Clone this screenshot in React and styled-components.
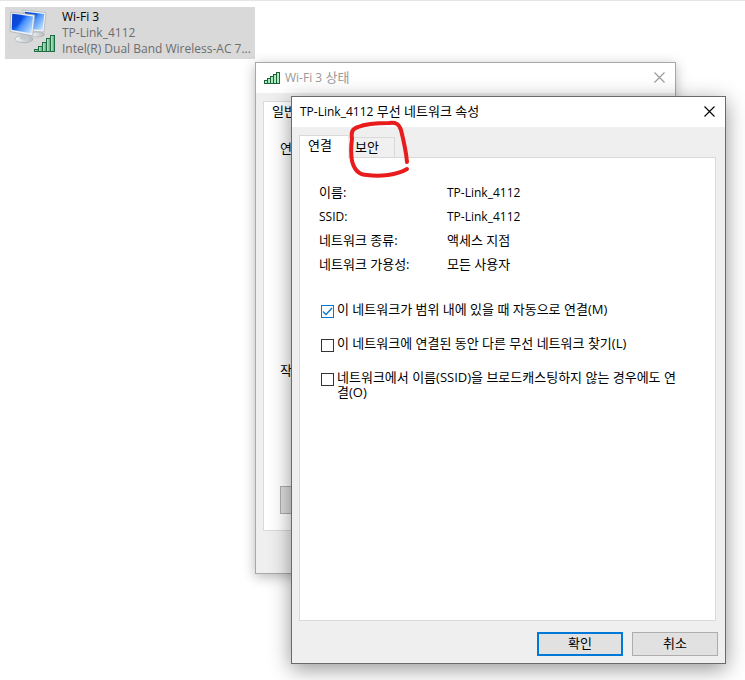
import React, { useState } from 'react';
import styled, { createGlobalStyle, css } from 'styled-components';

const GlobalStyle = createGlobalStyle`
  *, *::before, *::after {
    box-sizing: border-box;
  }

  body {
    margin: 0;
    background: #fff;
    color: #000;
    font-family: 'Open Sans', 'Noto Sans CJK KR', sans-serif;
    font-size: 13px;
    line-height: 16px;
  }

  button, input {
    font: inherit;
    color: inherit;
  }
`;

const Desktop = styled.main`
  position: relative;
  min-height: 100vh;
  padding: 6px 5px;
  border-top: 1px solid #e5e5e5;
  overflow: hidden;
`;

const Latin = styled.span`
  font-size: 12px;
`;

const Connection = styled.article`
  display: flex;
  gap: 6px;
  width: 250px;
  height: 52px;
  padding: 2px 0 2px 3px;
  background: #d9d9d9;
`;

const ConnectionText = styled.div`
  flex: 1;
  min-width: 0;
`;

const ConnectionLine = styled.div`
  overflow: hidden;
  white-space: nowrap;
  font-size: 12px;
  color: ${({ strong }) => (strong ? '#000' : '#6d6d6d')};
`;

const Window = styled.section`
  position: absolute;
  isolation: isolate;
  display: flex;
  flex-direction: column;
  background: #efefef;
  border: 1px solid #a8a8a8;
  box-shadow: 0 3px 12px rgba(0, 0, 0, 0.28);

  ${({ active }) =>
    active &&
    css`
      border-color: #6a6a6a;
      box-shadow: 0 5px 20px rgba(0, 0, 0, 0.42);
    `}
`;

const StatusWindow = styled(Window)`
  left: 255px;
  top: 61px;
  width: 421px;
  min-height: 512px;
`;

const PropertiesWindow = styled(Window)`
  left: 291px;
  top: 95px;
  width: 435px;
  min-height: 568px;
`;

const TitleBar = styled.header`
  display: flex;
  align-items: center;
  gap: 4px;
  height: 30px;
  padding: 0 8px 1px;
  background: #fff;
  color: ${({ inactive }) => (inactive ? '#999' : '#000')};
`;

const Title = styled.h1`
  flex: 1;
  margin: 0;
  font-size: 13px;
  font-weight: normal;
`;

const CloseButton = styled.button`
  display: flex;
  padding: 2px;
  border: none;
  background: transparent;
`;

const WindowBody = styled.div`
  flex: 1;
  display: flex;
  flex-direction: column;
  padding: 8px 9px 0 7px;
`;

const TabList = styled.div`
  display: flex;
  align-items: flex-end;
  height: 22px;
`;

const Tab = styled.button`
  height: 20px;
  padding: 0 15px 2px 7px;
  border: 1px solid #d9d9d9;
  border-width: 1px 1px 0 0;
  background: #f0f0f0;

  ${({ selected }) =>
    selected &&
    css`
      z-index: 1;
      height: 23px;
      margin-bottom: -1px;
      padding: 0 16px 4px 8px;
      border-width: 1px 0 0 1px;
      background: #fff;
    `}
`;

const TabPanel = styled.div`
  flex: 1;
  border: 1px solid #d9d9d9;
  background: #fff;
`;

const StatusPanel = styled(TabPanel)`
  display: flex;
  flex-direction: column;
  align-items: flex-start;
  flex: none;
  padding: 16px;
`;

const Group = styled.h2`
  height: ${({ tall }) => (tall ? '222px' : '124px')};
  margin: 0;
  font-size: 13px;
  font-weight: normal;
`;

const PropertiesPanel = styled(TabPanel)`
  padding: 22px 19px;
`;

const Details = styled.dl`
  display: grid;
  grid-template-columns: 128px 1fr;
  grid-auto-rows: 24px;
  margin: 0 0 26px;
  line-height: 24px;
`;

const Term = styled.dt`
  margin: 0;
`;

const Value = styled.dd`
  margin: 0;
`;

const Options = styled.div`
  display: flex;
  flex-direction: column;
  gap: 18px;
`;

const Option = styled.label`
  display: flex;
  align-items: flex-start;
  gap: 3px;
  padding-left: 2px;
  line-height: 15px;
`;

const CheckSlot = styled.span`
  position: relative;
  flex: none;
  width: 13px;
  height: 13px;
  margin-top: 3px;

  svg {
    position: absolute;
    inset: 0;
    pointer-events: none;
  }
`;

const CheckInput = styled.input`
  display: block;
  width: 13px;
  height: 13px;
  margin: 0;
  appearance: none;
  border: 1px solid #333;
  background: #fff;

  &:checked {
    border-color: #0078d7;
  }
`;

const OptionText = styled.span`
  max-width: 350px;
  word-break: break-all;
`;

const Footer = styled.footer`
  display: flex;
  justify-content: flex-end;
  gap: 9px;
  padding: 11px 7px 7px;
`;

const Button = styled.button`
  width: 86px;
  height: 24px;
  padding: 0 0 2px;
  border: 1px solid #adadad;
  background: #e1e1e1;

  ${({ primary }) =>
    primary &&
    css`
      border: 2px solid #0078d7;
    `}
`;

const StatusButton = styled(Button)`
  height: 28px;
  background: #ddd;
`;

const Marker = styled.svg`
  position: absolute;
  left: 345px;
  top: 117px;
  pointer-events: none;
`;

const NetworkIcon = () => (
  <svg width="48" height="48" viewBox="0 0 48 48" aria-hidden="true">
    <defs>
      <linearGradient id="screen" x1="0" y1="0.1" x2="1" y2="0.8">
        <stop offset="0" stopColor="#0b45d0" />
        <stop offset="0.4" stopColor="#0f5cf0" />
        <stop offset="0.55" stopColor="#4c95fb" />
        <stop offset="1" stopColor="#c4e2ff" />
      </linearGradient>
      <linearGradient id="stand" x1="0" y1="0" x2="1" y2="0">
        <stop offset="0" stopColor="#f4f5f6" />
        <stop offset="1" stopColor="#b4b9bd" />
      </linearGradient>
      <linearGradient id="bar" x1="0" y1="0" x2="1" y2="0">
        <stop offset="0" stopColor="#c9f0d2" />
        <stop offset="1" stopColor="#4fa873" />
      </linearGradient>
    </defs>
    <ellipse cx="30" cy="25.5" rx="6.5" ry="2.5" fill="url(#stand)" stroke="#a8adb1" strokeWidth="0.6" />
    <path d="M14.5 1 L38 3.5 L36 23 L22 22 Z" fill="#edf1f4" stroke="#a9b0b6" strokeWidth="0.7" />
    <path d="M16.5 2.8 L36.3 5 L34.6 21 L22 20 Z" fill="url(#screen)" />
    <ellipse cx="16" cy="30" rx="9" ry="3.7" fill="url(#stand)" stroke="#a8adb1" strokeWidth="0.7" />
    <path d="M12 23 L20 24.5 L19.5 30 C17 31 14 31 12 29.5 Z" fill="#c4c9cd" />
    <path d="M2.8 3 L26.8 6 L24.7 26.8 L2 22.5 Z" fill="#edf1f4" stroke="#a1a9b0" strokeWidth="0.7" />
    <path d="M4.3 4.8 L25 7.4 L23.3 24.6 L3.7 20.8 Z" fill="url(#screen)" />
    <path d="M4.3 4.8 L15 6.1 C14 13 10 18 3.8 19 Z" fill="#0a3fc8" opacity="0.45" />
    <g fill="url(#bar)" stroke="#1f6b43">
      <rect x="26.5" y="40.5" width="4" height="2" />
      <rect x="30.5" y="37.5" width="4" height="5" />
      <rect x="34.5" y="33.5" width="4" height="9" />
      <rect x="38.5" y="29.5" width="4" height="13" />
      <rect x="42.5" y="26.5" width="4" height="16" />
    </g>
  </svg>
);

const SignalIcon = () => (
  <svg width="17" height="12" viewBox="0 0 17 12" aria-hidden="true">
    <g fill="#a9edbd" stroke="#1f5f3b">
      <rect x="0.5" y="8.5" width="3" height="3" />
      <rect x="3.5" y="6.5" width="3" height="5" />
      <rect x="6.5" y="4.5" width="3" height="7" />
      <rect x="9.5" y="2.5" width="3" height="9" />
      <rect x="12.5" y="0.5" width="3" height="11" />
    </g>
  </svg>
);

const CloseIcon = () => (
  <svg width="11" height="11" viewBox="0 0 11 11" aria-hidden="true">
    <path d="M0.5 0.5 L10.5 10.5 M10.5 0.5 L0.5 10.5" stroke="currentColor" strokeWidth="1.1" />
  </svg>
);

const CheckOption = ({ label, checked, onChange }) => (
  <Option>
    <CheckSlot>
      <CheckInput type="checkbox" checked={checked} onChange={onChange} />
      {checked && (
        <svg width="13" height="13" viewBox="0 0 13 13" aria-hidden="true">
          <path d="M2 6.5 L5 9.5 L11 3" fill="none" stroke="#0078d7" strokeWidth="1.3" />
        </svg>
      )}
    </CheckSlot>
    <OptionText>{label}</OptionText>
  </Option>
);

const details = [
  ['이름:', <Latin>TP-Link_4112</Latin>],
  [<Latin>SSID:</Latin>, <Latin>TP-Link_4112</Latin>],
  ['네트워크 종류:', '액세스 지점'],
  ['네트워크 가용성:', '모든 사용자'],
];

const options = [
  '이 네트워크가 범위 내에 있을 때 자동으로 연결(M)',
  '이 네트워크에 연결된 동안 다른 무선 네트워크 찾기(L)',
  '네트워크에서 이름(SSID)을 브로드캐스팅하지 않는 경우에도 연결(O)',
];

const App = () => {
  const [checked, setChecked] = useState([true, false, false]);

  const toggle = (index) =>
    setChecked(checked.map((value, i) => (i === index ? !value : value)));

  return (
    <>
      <GlobalStyle />
      <Desktop>
        <Connection>
          <NetworkIcon />
          <ConnectionText>
            <ConnectionLine strong>Wi-Fi 3</ConnectionLine>
            <ConnectionLine>TP-Link_4112</ConnectionLine>
            <ConnectionLine>Intel(R) Dual Band Wireless-AC 7...</ConnectionLine>
          </ConnectionText>
        </Connection>

        <StatusWindow>
          <TitleBar inactive>
            <SignalIcon />
            <Title>
              <Latin>Wi-Fi 3</Latin> 상태
            </Title>
            <CloseButton aria-label="닫기">
              <CloseIcon />
            </CloseButton>
          </TitleBar>
          <WindowBody>
            <TabList role="tablist">
              <Tab role="tab" aria-selected="true" selected>
                일반
              </Tab>
            </TabList>
            <StatusPanel role="tabpanel">
              <Group tall>연결</Group>
              <Group>작업</Group>
              <StatusButton aria-label="속성" />
            </StatusPanel>
          </WindowBody>
        </StatusWindow>

        <PropertiesWindow active>
          <TitleBar>
            <Title>
              <Latin>TP-Link_4112</Latin> 무선 네트워크 속성
            </Title>
            <CloseButton aria-label="닫기">
              <CloseIcon />
            </CloseButton>
          </TitleBar>
          <WindowBody>
            <TabList role="tablist">
              <Tab role="tab" aria-selected="true" selected>
                연결
              </Tab>
              <Tab role="tab" aria-selected="false">
                보안
              </Tab>
            </TabList>
            <PropertiesPanel role="tabpanel">
              <Details>
                {details.map(([term, value], index) => (
                  <React.Fragment key={index}>
                    <Term>{term}</Term>
                    <Value>{value}</Value>
                  </React.Fragment>
                ))}
              </Details>
              <Options>
                {options.map((label, index) => (
                  <CheckOption
                    key={label}
                    label={label}
                    checked={checked[index]}
                    onChange={() => toggle(index)}
                  />
                ))}
              </Options>
            </PropertiesPanel>
          </WindowBody>
          <Footer>
            <Button primary>확인</Button>
            <Button>취소</Button>
          </Footer>
        </PropertiesWindow>

        <Marker width="68" height="64" viewBox="345 118 68 64" aria-hidden="true">
          <path
            d="M407 162 C406 150 403 138 401 130 C399 124 396 122 389 123 C378 123 365 124 358 127 C352 129 351 132 352 139 C351 146 351 155 352 161 C354 169 359 175 367 175 C380 177 397 175 407 169"
            fill="none"
            stroke="#e81c1c"
            strokeWidth="4"
            strokeLinecap="round"
            strokeLinejoin="round"
          />
        </Marker>
      </Desktop>
    </>
  );
};

export default App;
